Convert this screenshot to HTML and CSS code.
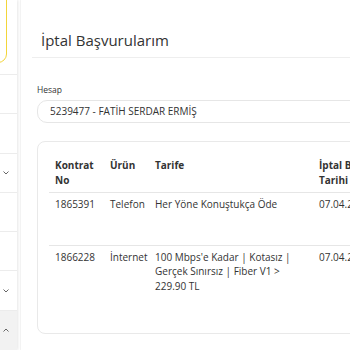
FILE: index.html
```html
<!DOCTYPE html>
<html lang="tr">
<head>
<meta charset="utf-8">
<link rel="stylesheet" href="styles.css">
</head>
<body>
<div class="page">
  <aside class="sidebar">
    <div class="side-top"><div class="user-box"></div></div>
    <div class="side-item"></div>
    <div class="side-item"></div>
    <div class="side-item"><svg class="chev" viewBox="0 0 6 4" width="6" height="4"><polyline points="0.5,0.5 3,3 5.5,0.5" /></svg></div>
    <div class="side-item"></div>
    <div class="side-item"></div>
    <div class="side-item"><svg class="chev" viewBox="0 0 6 4" width="6" height="4"><polyline points="0.5,0.5 3,3 5.5,0.5" /></svg></div>
    <div class="side-item active"><svg class="chev" viewBox="0 0 6 4" width="6" height="4"><polyline points="0.5,3.5 3,1 5.5,3.5" /></svg></div>
  </aside>
  <main class="main">
    <h1 class="title">İptal Başvurularım</h1>
    <div class="content">
      <label class="field-label">Hesap</label>
      <div class="select">5239477 - FATİH SERDAR ERMİŞ</div>
      <div class="card">
        <table class="table">
          <colgroup>
            <col class="c1"><col class="c2"><col class="c3"><col class="c4">
          </colgroup>
          <thead>
            <tr><th>Kontrat No</th><th>Ürün</th><th>Tarife</th><th>İptal Başvuru Tarihi</th></tr>
          </thead>
          <tbody>
            <tr><td>1865391</td><td>Telefon</td><td>Her Yöne Konuştukça Öde</td><td>07.04.2023</td></tr>
            <tr><td>1866228</td><td>İnternet</td><td>100 Mbps'e Kadar | Kotasız | Gerçek Sınırsız | Fiber V1 &gt; 229.90 TL</td><td>07.04.2023</td></tr>
          </tbody>
        </table>
      </div>
    </div>
  </main>
</div>
</body>
</html>
```
FILE: styles.css
```css
html, body {
  margin: 0;
  padding: 0;
  background: #ffffff;
  font-family: "Open Sans", "Noto Sans", sans-serif;
  color: #333333;
}
.page {
  display: flex;
  width: 350px;
  height: 350px;
  overflow: hidden;
}
.sidebar {
  flex: 0 0 17px;
  width: 17px;
  display: flex;
  flex-direction: column;
  background: #ffffff;
  box-shadow: 1px 0 3px rgba(0, 0, 0, 0.10);
  margin-right: 3px;
  position: relative;
  z-index: 1;
}
.side-top {
  height: 75px;
  border-bottom: 1px solid #ececec;
  box-sizing: border-box;
  padding-right: 10px;
}
.user-box {
  margin-left: -40px;
  margin-top: -20px;
  height: 83px;
  border: 1px solid #f3d53a;
  border-radius: 9px;
  box-sizing: border-box;
}
.side-item {
  height: 39.3px;
  border-bottom: 1px solid #ececec;
  box-sizing: border-box;
  display: flex;
  align-items: center;
  padding-left: 3px;
}
.side-item.active {
  background: #f2f2f2;
  border-bottom: none;
  flex: 1;
}
.chev {
  fill: none;
  stroke: #666666;
  stroke-width: 1;
}
.main {
  flex: 1 0 auto;
  padding-left: 11px;
  border-left: 1px solid #f4f4f4;
}
.title {
  margin: 0;
  padding: 29px 0 6px 9px;
  font-size: 15px;
  line-height: 22px;
  font-weight: 400;
  color: #333333;
  border-bottom: 1px solid #eeeeee;
  width: 500px;
}
.content {
  padding-left: 5px;
}
.field-label {
  display: block;
  margin-top: 26px;
  font-size: 8.5px;
  line-height: 12px;
  color: #333333;
}
.select {
  margin-top: 4px;
  width: 500px;
  height: 23px;
  box-sizing: border-box;
  border: 1px solid #e6e6e6;
  border-radius: 10px;
  padding-left: 12px;
  font-size: 10px;
  line-height: 21px;
  color: #333333;
}
.card {
  margin-top: 18px;
  width: 500px;
  border: 1px solid #e9e9e9;
  border-radius: 8px;
  padding: 9px 0 7px 11px;
}
.table {
  border-collapse: collapse;
  table-layout: fixed;
  width: 344px;
  font-size: 10px;
  line-height: 14.5px;
  color: #333333;
}
.c1 { width: 55px; }
.c2 { width: 45px; }
.c3 { width: 164px; }
.c4 { width: 80px; }
.table th {
  text-align: left;
  font-weight: 700;
  padding: 7px 3px 4px 6px;
  line-height: 15px;
  vertical-align: top;
  border-bottom: 1px solid #e6e6e6;
}
.table td {
  padding: 4px 10px 33px 6px;
  vertical-align: top;
  white-space: normal;
}
.table tbody tr:first-child td {
  border-bottom: 1px solid #e6e6e6;
}
.table td:nth-child(2) {
  padding-right: 0;
}
```
